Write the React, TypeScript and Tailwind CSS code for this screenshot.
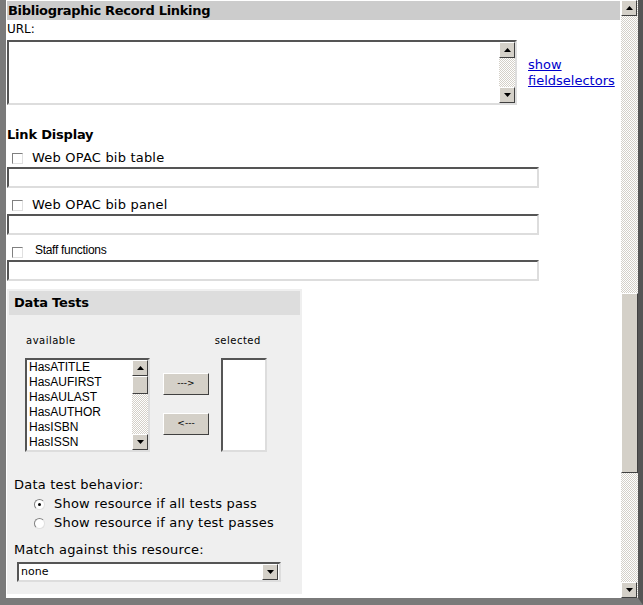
const dv = { fontFamily: '"DejaVu Sans", Verdana, sans-serif' };
const ar = { fontFamily: '"Liberation Sans", Arial, sans-serif' };

function Arrow({ up }: { up?: boolean }) {
  return (
    <div className="flex h-[16px] w-[16px] items-center justify-center border border-t-white border-l-white border-r-[#404040] border-b-[#404040] bg-[#d4d0c8]">
      <svg width="7" height="4" viewBox="0 0 7 4">
        <polygon points={up ? "0,4 7,4 3.5,0" : "0,0 7,0 3.5,4"} fill="#000" />
      </svg>
    </div>
  );
}

const track = "bg-[repeating-conic-gradient(#d4d0c8_0_25%,#ffffff_0_50%)] bg-[length:2px_2px]";

function Check({ className = "" }: { className?: string }) {
  return <span className={`inline-block h-[11px] w-[11px] border border-[#808080] border-r-[#e0e0e0] border-b-[#e0e0e0] bg-white ${className}`} />;
}

function Field() {
  return <div className="h-[21px] w-[532px] border-2 border-t-[#555] border-l-[#555] border-r-[#ddd] border-b-[#ddd] bg-white" />;
}

export default function App() {
  return (
    <div className="flex h-[605px] w-[643px] overflow-hidden bg-white text-black" style={dv}>
      <div className="flex h-[605px] flex-1 border-l-[6px] border-b-[7px] border-[#7a7a7a] border-r-[5px] border-r-[#555]">
        <div className="flex flex-1 flex-col pl-px">
          <div className="mt-px h-[19px] w-[613px] bg-[#cccccc] pl-[1px] text-[13px] font-bold leading-[19px] tracking-[-0.3px]">Bibliographic Record Linking</div>
          <div className="mt-[1px] text-[12px] leading-[16px]">URL:</div>
          <div className="mt-[3px] flex items-center">
            <div className="flex h-[65px] w-[510px] justify-end border-2 border-t-[#555] border-l-[#555] border-r-[#ddd] border-b-[#ddd] bg-white">
              <div className={`flex w-[16px] flex-col justify-between ${track}`}>
                <Arrow up />
                <Arrow />
              </div>
            </div>
            <div className="ml-[11px] text-[13px] leading-[16px] text-[#0000cc] underline">
              show<br />fieldselectors
            </div>
          </div>
          <div className="mt-[22px] text-[13px] font-bold leading-[16px] tracking-[-0.2px]">Link Display</div>
          <div className="mt-[8px] flex items-center gap-[9px] pl-[5px] text-[13px] leading-[14px] tracking-[0.2px]"><Check />Web OPAC bib table</div>
          <div className="mt-[2px]"><Field /></div>
          <div className="mt-[10px] flex items-center gap-[9px] pl-[5px] text-[13px] leading-[14px] tracking-[0.2px]"><Check />Web OPAC bib panel</div>
          <div className="mt-[2px]"><Field /></div>
          <div className="mt-[8px] flex items-start gap-[12px] pl-[5px] text-[12px] leading-[14px]" style={ar}>
            <Check className="mt-[4px]" /><span className="tracking-[-0.3px]">Staff functions</span>
          </div>
          <div className="mt-[2px]"><Field /></div>
          <div className="mt-[8px] flex h-[305px] w-[295px] flex-col bg-[#efefef] px-[2px] pt-[2px]">
            <div className="h-[24px] bg-[#dddddd] pl-[5px] text-[13px] font-bold leading-[24px] tracking-[-0.2px]">Data Tests</div>
            <div className="mt-[20px] flex text-[10px] leading-[12px]">
              <span className="ml-[17px] tracking-[0.5px]">available</span>
              <span className="ml-[139px] tracking-[0.5px]">selected</span>
            </div>
            <div className="mt-[11px] flex items-start pl-[16px]">
              <div className="flex h-[94px] w-[125px] border-2 border-t-[#555] border-l-[#555] border-r-[#ddd] border-b-[#ddd] bg-white" style={ar}>
                <div className="flex-1 pl-[2px] text-[12px] leading-[15px]">
                  {["HasATITLE", "HasAUFIRST", "HasAULAST", "HasAUTHOR", "HasISBN", "HasISSN"].map((t) => <div key={t}>{t}</div>)}
                </div>
                <div className={`flex w-[16px] flex-col ${track}`}>
                  <Arrow up />
                  <div className="h-[18px] border border-t-white border-l-white border-r-[#404040] border-b-[#404040] bg-[#d4d0c8]" />
                  <div className="flex-1" />
                  <Arrow />
                </div>
              </div>
              <div className="ml-[13px] mt-[15px] flex flex-col gap-[18px]">
                {["--->", "<---"].map((b) => (
                  <div key={b} className="flex h-[22px] w-[46px] items-center justify-center border border-t-white border-l-white border-r-[#404040] border-b-[#404040] bg-[#d4d0c8] text-[9px]">{b}</div>
                ))}
              </div>
              <div className="ml-[12px] h-[94px] w-[46px] border-2 border-t-[#555] border-l-[#555] border-r-[#ddd] border-b-[#ddd] bg-white" />
            </div>
            <div className="mt-[25px] pl-[5px] text-[13px] leading-[16px] tracking-[0.2px]">Data test behavior:</div>
            {["Show resource if all tests pass", "Show resource if any test passes"].map((t, i) => (
              <div key={t} className="mt-[3px] flex items-center gap-[9px] pl-[25px] text-[13px] leading-[16px] tracking-[0.2px]">
                <span className="flex h-[11px] w-[11px] items-center justify-center rounded-full border border-[#808080] border-r-[#e0e0e0] border-b-[#e0e0e0] bg-white">
                  {i === 0 && <span className="h-[3px] w-[3px] rounded-full bg-black" />}
                </span>
                {t}
              </div>
            ))}
            <div className="mt-[11px] pl-[5px] text-[13px] leading-[16px] tracking-[0.2px]">Match against this resource:</div>
            <div className="ml-[8px] mt-[4px] flex h-[20px] w-[264px] items-center border-2 border-t-[#555] border-l-[#555] border-r-[#ddd] border-b-[#ddd] bg-white pr-px">
              <span className="flex-1 pl-[2px] text-[11px]">none</span>
              <Arrow />
            </div>
          </div>
        </div>
        <div className={`flex w-[17px] flex-col ${track}`}>
          <Arrow up />
          <div className="h-[277px]" />
          <div className="h-[180px] border border-t-white border-l-white border-r-[#404040] border-b-[#404040] bg-[#d4d0c8]" />
          <div className="flex-1" />
          <Arrow />
        </div>
      </div>
    </div>
  );
}
